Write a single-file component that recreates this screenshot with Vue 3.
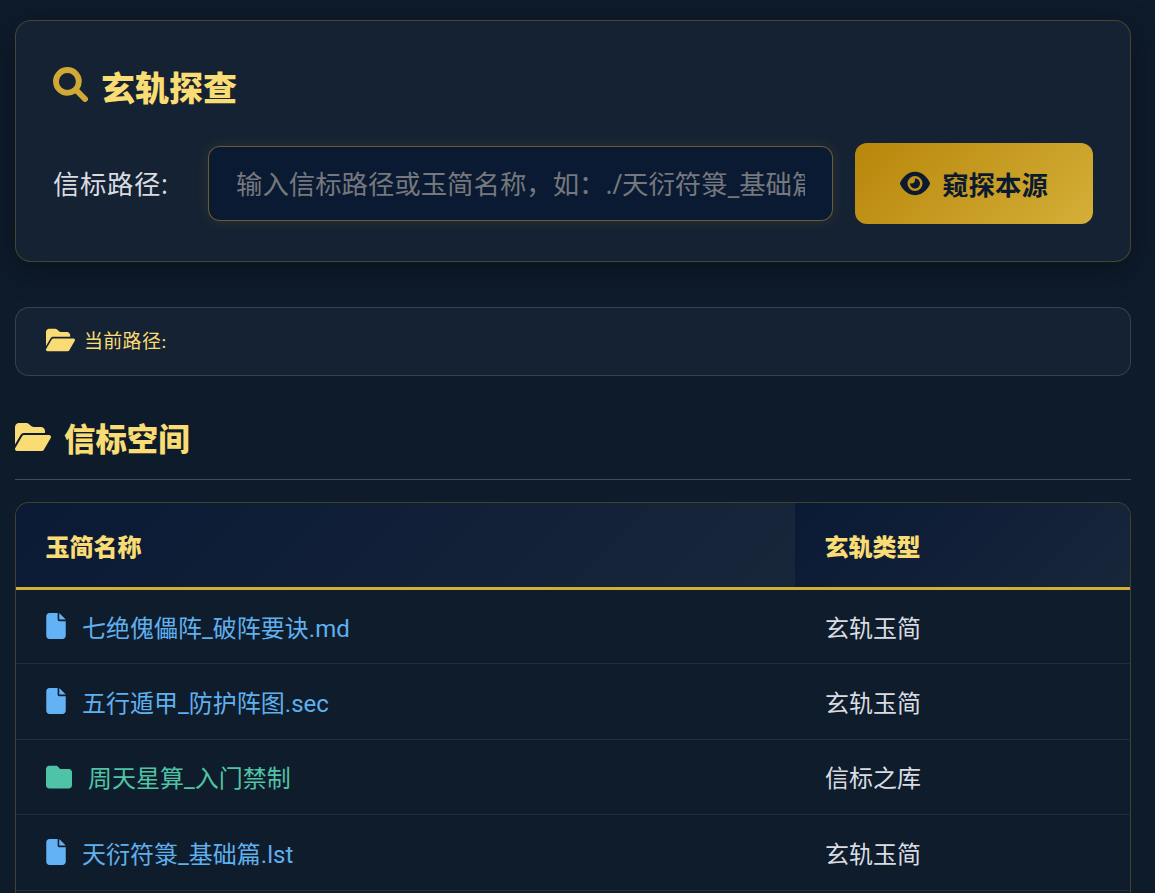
<template>
  <div class="page">
    <section class="search-card">
      <h2 class="search-title">
        <svg class="ico-search" viewBox="-14 -14 540 540"><path :d="icons.search" /></svg>
        <span>玄轨探查</span>
      </h2>
      <div class="search-row">
        <label class="search-label">信标路径:</label>
        <input class="search-input" type="text" placeholder="输入信标路径或玉简名称，如：./天衍符箓_基础篇.lst" />
        <button class="search-btn">
          <svg class="ico-eye" viewBox="0 0 576 512"><path :d="icons.eye" /></svg>
          <span>窥探本源</span>
        </button>
      </div>
    </section>

    <div class="path-bar">
      <svg class="ico-path" viewBox="0 0 576 512"><path :d="icons.folderOpen" /></svg>
      <span>当前路径:</span>
    </div>

    <h3 class="section-title">
      <svg class="ico-section" viewBox="0 0 576 512"><path :d="icons.folderOpen" /></svg>
      <span>信标空间</span>
    </h3>

    <div class="table-wrap">
      <table class="file-table">
        <thead>
          <tr>
            <th class="col-name">玉简名称</th>
            <th>玄轨类型</th>
          </tr>
        </thead>
        <tbody>
          <tr v-for="row in rows" :key="row.name">
            <td>
              <div class="name-cell" :class="row.dir ? 'is-dir' : 'is-file'">
                <svg v-if="row.dir" class="ico-folder" viewBox="0 0 512 512"><path :d="icons.folder" /></svg>
                <svg v-else class="ico-file" viewBox="0 0 384 512"><path :d="icons.file" /></svg>
                <span>{{ row.name }}</span>
              </div>
            </td>
            <td class="type-cell">{{ row.type }}</td>
          </tr>
        </tbody>
      </table>
    </div>
  </div>
</template>

<script setup>
const icons = {
  search: 'M416 208c0 45.9-14.9 88.3-40 122.7L502.6 457.4c12.5 12.5 12.5 32.8 0 45.3s-32.8 12.5-45.3 0L330.7 376c-34.4 25.2-76.8 40-122.7 40C93.1 416 0 322.9 0 208S93.1 0 208 0S416 93.1 416 208zM208 352a144 144 0 1 0 0-288 144 144 0 1 0 0 288z',
  eye: 'M288 32c-80.8 0-145.5 36.8-192.6 80.6C48.6 156 17.3 208 2.5 243.7c-3.3 7.9-3.3 16.7 0 24.6C17.3 304 48.6 356 95.4 399.4C142.5 443.2 207.2 480 288 480s145.5-36.8 192.6-80.6c46.8-43.5 78.1-95.4 93-131.1c3.3-7.9 3.3-16.7 0-24.6c-14.9-35.7-46.2-87.7-93-131.1C433.5 68.8 368.8 32 288 32zM144 256a144 144 0 1 1 288 0 144 144 0 1 1 -288 0zm144-64c0 35.3-28.7 64-64 64c-7.1 0-13.9-1.2-20.3-3.3c-5.5-1.8-11.9 1.6-11.7 7.4c.3 6.9 1.3 13.8 3.2 20.7c13.7 51.2 66.4 81.6 117.6 67.9s81.6-66.4 67.9-117.6c-11.1-41.5-47.8-69.4-88.6-71.1c-5.8-.2-9.2 6.1-7.4 11.7c2.1 6.4 3.3 13.2 3.3 20.3z',
  folderOpen: 'M88.7 223.8L0 375.8V96C0 60.7 28.7 32 64 32H181.5c17 0 33.3 6.7 45.3 18.7l26.5 26.5c12 12 28.3 18.7 45.3 18.7H416c35.3 0 64 28.7 64 64v32H144c-22.8 0-43.8 12.1-55.3 31.8zm27.6 16.1C122.1 230 132.6 224 144 224H544c11.5 0 22 6.1 27.7 16.1s5.7 22.2-.1 32.1l-112 192C453.9 474 443.4 480 432 480H32c-11.5 0-22-6.1-27.7-16.1s-5.7-22.2 .1-32.1l112-192z',
  file: 'M0 64C0 28.7 28.7 0 64 0H224V128c0 17.7 14.3 32 32 32H384V448c0 35.3-28.7 64-64 64H64c-35.3 0-64-28.7-64-64V64zm384 64H256V0L384 128z',
  folder: 'M64 480H448c35.3 0 64-28.7 64-64V160c0-35.3-28.7-64-64-64H288c-10.1 0-19.6-4.7-25.6-12.8L243.2 57.6C231.1 41.5 212.1 32 192 32H64C28.7 32 0 60.7 0 96V416c0 35.3 28.7 64 64 64z'
}

const rows = [
  { name: '七绝傀儡阵_破阵要诀.md', type: '玄轨玉简' },
  { name: '五行遁甲_防护阵图.sec', type: '玄轨玉简' },
  { name: '周天星算_入门禁制', type: '信标之库', dir: true },
  { name: '天衍符箓_基础篇.lst', type: '玄轨玉简' }
]
</script>

<style>
html, body {
  margin: 0;
  height: 893px;
  overflow: hidden;
  background: #0e1b2b;
}
</style>

<style scoped>
.page {
  height: 893px;
  overflow: hidden;
  box-sizing: border-box;
  padding: 20px 24px 0 15px;
  font-family: "Open Sans", "Noto Sans CJK SC", sans-serif;
  color: #d9dde2;
  background: #0e1b2b;
}
svg {
  display: block;
  flex: none;
  fill: currentColor;
}

.search-card {
  box-sizing: border-box;
  height: 242px;
  padding: 41px 37px 0;
  background: #152233;
  border: 1px solid rgba(212, 175, 55, 0.25);
  border-radius: 16px;
  box-shadow: 0 8px 32px rgba(0, 0, 0, 0.3);
}
.search-title {
  display: flex;
  align-items: center;
  gap: 13px;
  height: 48px;
  margin: 0 0 33px;
  font-size: 34px;
  font-weight: 900;
  color: #f9dc74;
}
.ico-search {
  width: 35px;
  height: 35px;
  margin-top: -3px;
  color: #d0a936;
  stroke: currentColor;
  stroke-width: 26;
  stroke-linejoin: round;
}
.search-row {
  display: flex;
  align-items: center;
}
.search-label {
  width: 155px;
  flex: none;
  margin-top: -2px;
  font-size: 26.4px;
  letter-spacing: 0.6px;
  color: #d9dce0;
}
.search-input {
  box-sizing: border-box;
  width: 625px;
  height: 75px;
  padding: 0 27px;
  background: #0b1a33;
  border: 1px solid rgba(212, 175, 55, 0.45);
  border-radius: 12px;
  outline: none;
  font-family: inherit;
  font-size: 26.4px;
  color: #d9dde2;
  box-shadow: 0 0 14px rgba(212, 175, 55, 0.12);
}
.search-input::placeholder {
  color: #75787c;
  opacity: 1;
}
.search-btn {
  display: flex;
  align-items: center;
  justify-content: center;
  gap: 12px;
  width: 238px;
  height: 81px;
  margin-left: 22px;
  border: none;
  border-radius: 12px;
  background: linear-gradient(135deg, #b8860b, #d4af37);
  font-family: inherit;
  font-size: 26.4px;
  font-weight: 700;
  color: #0c1a30;
}
.ico-eye {
  width: 30px;
  height: 27px;
}

.path-bar {
  display: flex;
  align-items: center;
  gap: 9px;
  box-sizing: border-box;
  height: 69px;
  margin-top: 45px;
  padding: 0 30px 4px;
  background: #152233;
  border: 1px solid rgba(255, 255, 255, 0.14);
  border-radius: 14px;
  font-family: "Liberation Serif", "Noto Sans CJK SC", serif;
  font-size: 19px;
  letter-spacing: 0.3px;
  color: #f9dc74;
}
.ico-path {
  width: 29px;
  height: 26px;
}

.section-title {
  display: flex;
  align-items: center;
  gap: 13px;
  box-sizing: border-box;
  height: 104px;
  margin: 0;
  padding: 20px 0 1px;
  border-bottom: 1px solid rgba(255, 255, 255, 0.22);
  font-size: 31.4px;
  font-weight: 900;
  color: #f9dc74;
}
.ico-section {
  width: 36px;
  height: 32px;
  margin-top: -1px;
}

.table-wrap {
  height: 400px;
  margin-top: 22px;
  background: #0f1c2c;
  border: 1px solid rgba(212, 175, 55, 0.25);
  border-bottom: none;
  border-radius: 14px 14px 0 0;
  overflow: hidden;
}
.file-table {
  width: 100%;
  border-collapse: collapse;
  table-layout: fixed;
}
.file-table th {
  box-sizing: border-box;
  height: 85px;
  padding: 2px 29px 0 29.5px;
  text-align: left;
  background: linear-gradient(135deg, #0a1a35, #18263a);
  border-bottom: 3px solid #d4af37;
  font-size: 24px;
  font-weight: 900;
  color: #f9dc74;
}
.file-table th.col-name {
  width: 779px;
}
.file-table td {
  box-sizing: border-box;
  height: 75.5px;
  padding: 0 29.5px 0 30px;
  border-bottom: 1px solid rgba(255, 255, 255, 0.08);
  font-size: 24px;
}
.type-cell {
  color: #d9dde2;
}
.name-cell {
  display: flex;
  align-items: center;
  gap: 16px;
  font-family: Roboto, "Noto Sans CJK SC", sans-serif;
}
.is-file {
  color: #5fb0ee;
}
.is-dir {
  color: #4fc3a6;
}
.ico-file {
  width: 20px;
  height: 26px;
  color: #62b2f5;
}
.ico-folder {
  width: 26px;
  height: 26px;
  margin-top: 1px;
}
</style>
